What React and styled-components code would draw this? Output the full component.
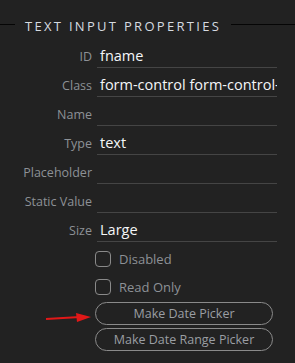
import React from 'react';
import styled, { createGlobalStyle } from 'styled-components';

// ----------------------------------------------------------------------

const GlobalStyle = createGlobalStyle`
    html, body {
        margin: 0;
        padding: 0;
        background: #222222;
    }
    body {
        font-family: "Open Sans", "Noto Sans", "DejaVu Sans", sans-serif;
    }
`;

const Panel = styled.div`
    width: 295px;
    height: 363px;
    background: #222222;
    padding-top: 15px;
    box-sizing: border-box;
    overflow: hidden;
`;

const Header = styled.div`
    display: flex;
    align-items: center;
    height: 18px;
    margin-bottom: 6px;
`;

const HeaderLine = styled.div`
    height: 1px;
    background: #050505;
    width: ${(p) => p.$width || 'auto'};
    flex: ${(p) => (p.$grow ? 1 : 'none')};
`;

const HeaderTitle = styled.div`
    padding: 3px 10px 0 10px;
    color: #d6dbe0;
    font-size: 13px;
    letter-spacing: 2.3px;
    white-space: nowrap;
`;

const FieldList = styled.div`
    display: flex;
    flex-direction: column;
`;

const FieldRow = styled.div`
    display: grid;
    grid-template-columns: 92px 180px;
    column-gap: 5px;
    height: 29px;
`;

const Label = styled.div`
    color: #8d9196;
    font-size: 12.5px;
    text-align: right;
    line-height: 22px;
    padding-top: 7px;
`;

const Value = styled.div`
    border-bottom: 1px solid #454545;
    color: #f4f6f8;
    font-size: 14.5px;
    line-height: 22px;
    padding: 6px 3px 0 3px;
    white-space: nowrap;
    overflow: hidden;
`;

const ChecksAndButtons = styled.div`
    display: flex;
    flex-direction: column;
    padding-left: 95px;
    padding-top: 3px;
`;

const CheckRow = styled.label`
    display: flex;
    align-items: center;
    gap: 8px;
    height: 28px;
    color: #8d9196;
    font-size: 13px;
`;

const Box = styled.span`
    width: 14px;
    height: 14px;
    border: 1px solid #8a8a8a;
    border-radius: 4px;
    box-sizing: content-box;
`;

const ButtonRow = styled.div`
    position: relative;
    display: flex;
    flex-direction: column;
    gap: 3px;
    margin-top: 1px;
`;

const PillButton = styled.button`
    width: 178px;
    height: 23px;
    border: 1px solid #8a8a8a;
    border-radius: 12px;
    background: transparent;
    color: #9a9ea3;
    font-family: inherit;
    font-size: 12.5px;
    padding: 0;
    cursor: pointer;
`;

const Arrow = styled.svg`
    position: absolute;
    left: -49px;
    top: 10px;
`;

const fields = [
    { label: 'ID', value: 'fname' },
    { label: 'Class', value: 'form-control form-control-lg' },
    { label: 'Name', value: '' },
    { label: 'Type', value: 'text' },
    { label: 'Placeholder', value: '' },
    { label: 'Static Value', value: '' },
    { label: 'Size', value: 'Large' },
];

function App() {
    return (
        <>
            <GlobalStyle />
            <Panel>
                <Header>
                    <HeaderLine $width="15px" />
                    <HeaderTitle>TEXT INPUT PROPERTIES</HeaderTitle>
                    <HeaderLine $grow />
                </Header>

                <FieldList>
                    {fields.map((f) => (
                        <FieldRow key={f.label}>
                            <Label>{f.label}</Label>
                            <Value>{f.value}</Value>
                        </FieldRow>
                    ))}
                </FieldList>

                <ChecksAndButtons>
                    <CheckRow><Box />Disabled</CheckRow>
                    <CheckRow><Box />Read Only</CheckRow>
                    <ButtonRow>
                        <Arrow width="46" height="12" viewBox="0 0 46 12">
                            <line x1="0" y1="7" x2="34" y2="5" stroke="#e01818" strokeWidth="2" />
                            <polygon points="30,1 45,5 31,10" fill="#e01818" />
                        </Arrow>
                        <PillButton type="button">Make Date Picker</PillButton>
                        <PillButton type="button">Make Date Range Picker</PillButton>
                    </ButtonRow>
                </ChecksAndButtons>
            </Panel>
        </>
    );
}

export default App;
